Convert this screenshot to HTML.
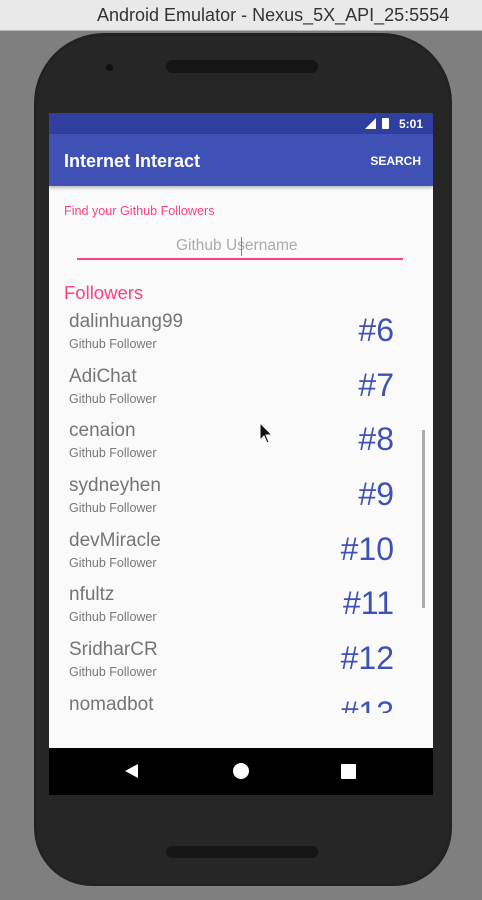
<!DOCTYPE html><html><head><style>
*{margin:0;padding:0}
body{width:482px;height:900px;background:#7f7f7f;position:relative;overflow:hidden;font-family:"Liberation Sans",sans-serif}
.a{position:absolute}
.name{font-size:19px;color:#757575;left:69px;white-space:nowrap}
.sub{font-size:12.5px;color:#777;left:69px}
.num{font-size:32px;color:#3f51b5;right:88px;text-align:right}
</style></head><body>
<div class="a" style="left:0;top:0;width:482px;height:30px;background:#e9e9e9;border-bottom:1px solid #bbb"></div>
<div class="a" style="left:97px;top:5px;font-size:18px;color:#333">Android Emulator - Nexus_5X_API_25:5554</div>
<div class="a" style="left:34px;top:33px;width:418px;height:853px;background:#222;border-radius:70px 70px 58px 58px"></div>
<div class="a" style="left:37px;top:36px;width:412px;height:847px;background:#262626;border-radius:66px 66px 55px 55px"></div>
<div class="a" style="left:106px;top:64px;width:7px;height:7px;border-radius:50%;background:#111"></div>
<div class="a" style="left:166px;top:60px;width:152px;height:13px;border-radius:7px;background:#151515"></div>
<div class="a" style="left:166px;top:846px;width:152px;height:12px;border-radius:6px;background:#151515"></div>
<div class="a" style="left:49px;top:113px;width:384px;height:635px;background:#fafafa;overflow:hidden">
 <div class="a" style="left:0;top:0;width:384px;height:21px;background:#303f9f"></div>
 <div class="a" style="right:10px;top:4px;font-size:12px;color:#fff;font-weight:bold">5:01</div>
 <div class="a" style="right:44px;top:5px;width:7px;height:11px;background:#fff;border-radius:1px"></div>
 <div class="a" style="right:57px;top:5px;width:0;height:0;border-left:11px solid transparent;border-bottom:11px solid #fff"></div>
 <div class="a" style="left:0;top:21px;width:384px;height:52px;background:#3f51b5;box-shadow:0 2px 3px rgba(0,0,0,.25)"></div>
 <div class="a" style="left:15px;top:38px;font-size:18px;color:#fff;font-weight:bold">Internet Interact</div>
 <div class="a" style="right:12px;top:41px;font-size:12px;color:#fff;font-weight:bold">SEARCH</div>
 <div class="a" style="left:15px;top:91px;font-size:12.6px;color:#ff4081">Find your Github Followers</div>
 <div class="a" style="left:127px;top:124px;font-size:15.5px;color:#aaa">Github Username</div>
 <div class="a" style="left:192px;top:124px;width:1px;height:19px;background:#ff4081"></div>
 <div class="a" style="left:28px;top:145px;width:326px;height:2px;background:#ff4081"></div>
 <div class="a" style="left:15px;top:169px;font-size:18.5px;color:#ff4081">Followers</div>
 <div class="a" style="left:373px;top:317px;width:3px;height:178px;background:#aaa"></div>
 <div class="a" style="left:0;top:190px;width:384px;height:410px;overflow:hidden">
  <div class="a" style="left:-49px;top:-303px;width:482px;height:900px">
   <div class="a name" style="top:311px">dalinhuang99</div><div class="a sub" style="top:337px">Github Follower</div><div class="a num" style="top:312px">#6</div>
   <div class="a name" style="top:366px">AdiChat</div><div class="a sub" style="top:392px">Github Follower</div><div class="a num" style="top:367px">#7</div>
   <div class="a name" style="top:420px">cenaion</div><div class="a sub" style="top:446px">Github Follower</div><div class="a num" style="top:421px">#8</div>
   <div class="a name" style="top:475px">sydneyhen</div><div class="a sub" style="top:501px">Github Follower</div><div class="a num" style="top:476px">#9</div>
   <div class="a name" style="top:530px">devMiracle</div><div class="a sub" style="top:556px">Github Follower</div><div class="a num" style="top:531px">#10</div>
   <div class="a name" style="top:584px">nfultz</div><div class="a sub" style="top:610px">Github Follower</div><div class="a num" style="top:585px">#11</div>
   <div class="a name" style="top:639px">SridharCR</div><div class="a sub" style="top:665px">Github Follower</div><div class="a num" style="top:640px">#12</div>
   <div class="a name" style="top:694px">nomadbot</div><div class="a sub" style="top:720px">Github Follower</div><div class="a num" style="top:695px">#13</div>
  </div>
 </div>
</div>
<div class="a" style="left:49px;top:748px;width:384px;height:47px;background:#000"></div>
<div class="a" style="left:125px;top:764px;width:0;height:0;border-top:7px solid transparent;border-bottom:7px solid transparent;border-right:13px solid #fff"></div>
<div class="a" style="left:233px;top:763px;width:16px;height:16px;border-radius:50%;background:#fff"></div>
<div class="a" style="left:341px;top:764px;width:15px;height:15px;background:#fff;border-radius:1px"></div>
<svg class="a" style="left:258px;top:422px" width="16" height="24" viewBox="0 0 16 24"><path d="M2 1 L2 18 L6 14 L9 21 L11 20 L8 13 L14 13 Z" fill="#111" stroke="#fff" stroke-width="1"/></svg>
</body></html>
